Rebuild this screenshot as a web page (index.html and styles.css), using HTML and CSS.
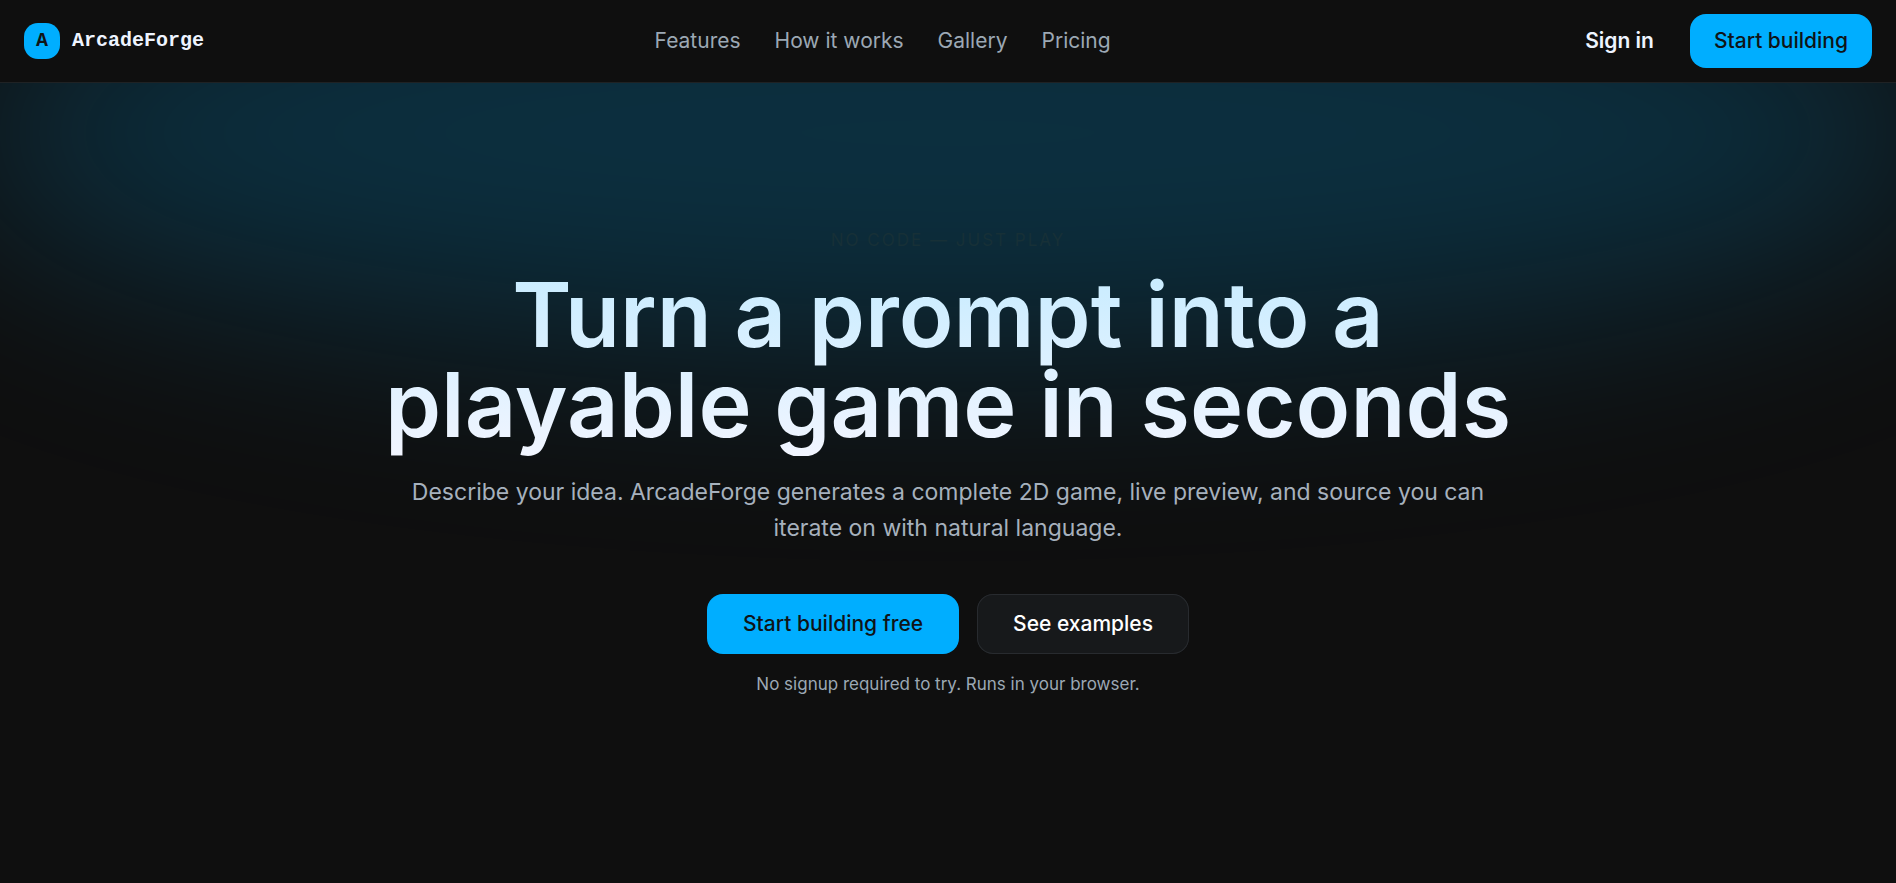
FILE: index.html
```html
<!DOCTYPE html>
<html lang="en">
<head>
  <meta charset="UTF-8">
  <meta name="viewport" content="width=device-width, initial-scale=1.0">
  <title>ArcadeForge</title>
  <link rel="stylesheet" href="styles.css">
</head>
<body>

  <header class="header">
    <a href="#" class="brand">
      <span class="brand-mark">A</span>
      <span>ArcadeForge</span>
    </a>
    <nav class="nav">
      <a href="#features">Features</a>
      <a href="#how">How it works</a>
      <a href="#gallery">Gallery</a>
      <a href="#pricing">Pricing</a>
    </nav>
    <div class="header-actions">
      <a href="#signin" class="sign-in">Sign in</a>
      <button type="button" class="btn btn-primary">Start building</button>
    </div>
  </header>

  <main class="hero">
    <div class="hero-glow"></div>
    <div class="hero-content">
      <p class="eyebrow">No code — just play</p>
      <h1 class="hero-title">Turn a prompt into a playable game in seconds</h1>
      <p class="hero-text">Describe your idea. ArcadeForge generates a complete 2D game, live preview, and source you can iterate on with natural language.</p>
      <div class="hero-actions">
        <button type="button" class="btn btn-primary btn-large">Start building free</button>
        <button type="button" class="btn btn-secondary btn-large">See examples</button>
      </div>
      <p class="hero-note">No signup required to try. Runs in your browser.</p>
    </div>
  </main>

</body>
</html>
```

FILE: styles.css
```css
* {
  box-sizing: border-box;
}

body {
  margin: 0;
  min-height: 100vh;
  display: flex;
  flex-direction: column;
  background-color: #0f0f0f;
  color: #eef4ff;
  font-family: Inter, "Liberation Sans", sans-serif;
  font-size: 21px;
  line-height: 30px;
}

a {
  color: inherit;
  text-decoration: none;
}

p,
h1 {
  margin: 0;
}

/* header */
.header {
  position: relative;
  z-index: 1;
  display: flex;
  justify-content: space-between;
  align-items: center;
  padding: 14px 24px;
  background-color: #0f0f0f;
  border-bottom: 1px solid #1f2224;
}

.brand {
  display: flex;
  align-items: center;
  gap: 12px;
  font-family: "Liberation Mono", monospace;
  font-size: 20px;
  font-weight: 700;
}

.brand-mark {
  display: flex;
  justify-content: center;
  align-items: center;
  width: 36px;
  height: 36px;
  border-radius: 14px;
  background-color: #00aeff;
  color: #0f1417;
}

.nav {
  display: flex;
  gap: 34px;
  color: #9ca8b4;
}

.nav a:hover {
  color: #eef4ff;
}

.header-actions {
  display: flex;
  align-items: center;
  gap: 12px;
}

.sign-in {
  padding: 0 24px;
  font-weight: 600;
}

/* buttons */
.btn {
  padding: 12px 24px;
  border: 0;
  border-radius: 16px;
  font: inherit;
  font-weight: 500;
  cursor: pointer;
}

.btn-large {
  padding: 15px 36px;
}

.btn-primary {
  background-color: #00aeff;
  color: #0f1417;
}

.btn-primary:hover {
  background-color: #1cb6ff;
}

.btn-secondary {
  background-color: #17191b;
  color: #ffffff;
  box-shadow: inset 0 0 0 1px #282b2f;
}

/* hero */
.hero {
  position: relative;
  flex: 1;
  overflow: hidden;
}

.hero-glow {
  position: absolute;
  top: -170px;
  left: -3%;
  width: 106%;
  height: 440px;
  border-radius: 50%;
  background-color: rgba(0, 174, 255, 0.2);
  filter: blur(100px);
}

.hero-content {
  position: relative;
  display: flex;
  flex-direction: column;
  align-items: center;
  max-width: 1152px;
  margin: 0 auto;
  padding: 144px 0;
  text-align: center;
}

.eyebrow {
  color: #173037;
  font-size: 17px;
  line-height: 27px;
  letter-spacing: 2px;
  text-transform: uppercase;
}

.hero-title {
  margin-top: 16px;
  padding-bottom: 6px;
  background-image: linear-gradient(#c8ecff, #f1f5ff);
  background-clip: text;
  -webkit-background-clip: text;
  color: transparent;
  font-size: 90px;
  font-weight: 600;
  line-height: 90px;
}

.hero-text {
  max-width: 1100px;
  margin-top: 18px;
  color: #a6b1bd;
  font-size: 23px;
  line-height: 36px;
}

.hero-actions {
  display: flex;
  gap: 18px;
  margin-top: 48px;
}

.hero-note {
  margin-top: 15px;
  color: #9ca8b4;
  font-size: 17px;
}
```
